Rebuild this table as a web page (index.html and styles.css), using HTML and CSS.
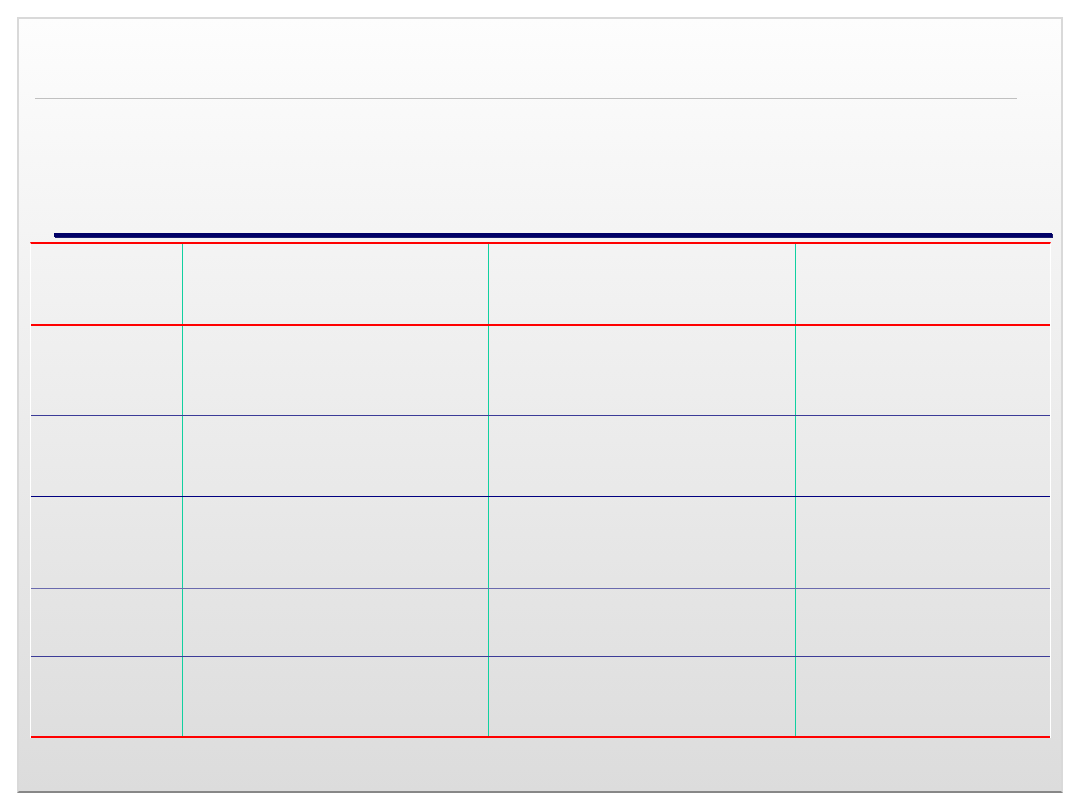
FILE: index.html
```html
<!DOCTYPE html>
<html>
<head>
<meta charset="utf-8">
<link rel="stylesheet" href="styles.css">
</head>
<body>
<div class="frame">
  <div class="rule"></div>
  <div class="bar"></div>
  <div class="table">
    <div class="row head"><div class="cell"></div><div class="cell"></div><div class="cell"></div><div class="cell"></div></div>
    <div class="row r1"><div class="cell"></div><div class="cell"></div><div class="cell"></div><div class="cell"></div></div>
    <div class="row r2"><div class="cell"></div><div class="cell"></div><div class="cell"></div><div class="cell"></div></div>
    <div class="row r3"><div class="cell"></div><div class="cell"></div><div class="cell"></div><div class="cell"></div></div>
    <div class="row r4"><div class="cell"></div><div class="cell"></div><div class="cell"></div><div class="cell"></div></div>
    <div class="row r5"><div class="cell"></div><div class="cell"></div><div class="cell"></div><div class="cell"></div></div>
  </div>
</div>
</body>
</html>
```
FILE: styles.css
```css
* { box-sizing: border-box; }
html, body { margin: 0; padding: 0; background: #ffffff; }
body { padding: 17px 0 0 17px; font-family: "Liberation Sans", Arial, sans-serif; }
.frame {
  width: 1046px;
  height: 776px;
  border: 2px solid #d9d9d9;
  border-bottom-color: #878787;
  background: linear-gradient(to bottom, #fdfdfd 0%, #dcdcdc 100%);
  padding-top: 79px;
}
.rule {
  margin-left: 16px;
  width: 982px;
  height: 1px;
  background: #c0c0c0;
}
.bar {
  margin-top: 134px;
  margin-left: 35px;
  width: 998px;
  height: 4px;
  background: #000066;
  box-shadow: 1px 1px 0 #1a1a6e;
}
.table {
  margin-top: 5px;
  margin-left: 11px;
  width: 1021px;
  border-top: 2px solid #ff0000;
  border-left: 1px solid #ffffff;
  border-right: 1px solid #ffffff;
}
.row {
  display: grid;
  grid-template-columns: 152px 306px 307px 1fr;
  border-bottom: 1px solid #000080;
}
.cell { border-right: 1px solid #10d0a0; }
.cell:last-child { border-right: none; }
.head { height: 82px; border-bottom: 2px solid #ff0000; }
.r1 { height: 90px; border-bottom-color: #3c3c98; }
.r2 { height: 81px; }
.r3 { height: 92px; border-bottom-color: #6a6aae; }
.r4 { height: 68px; border-bottom-color: #3c3c98; }
.r5 { height: 81px; border-bottom: 2px solid #ff0000; }
```
